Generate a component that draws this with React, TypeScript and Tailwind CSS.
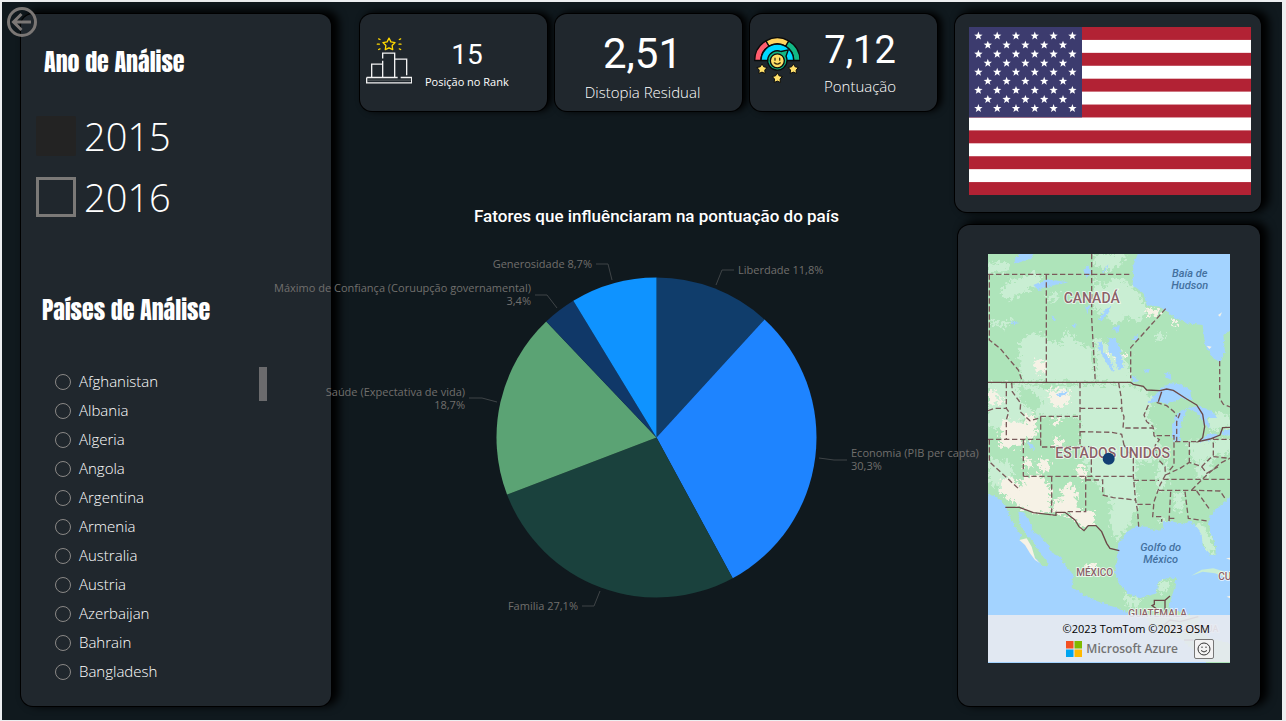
import React from "react";

const panel =
  "rounded-xl bg-[#20272d] shadow-[0_0_0_1px_#000,6px_-2px_8px_2px_#000]";
const card =
  "flex min-w-0 rounded-xl bg-[#20272d] shadow-[0_0_0_1px_#000,4px_-1px_7px_1px_#000]";
const heading =
  "font-['Impact','Anton',sans-serif] text-2xl font-normal leading-8 text-white";

const countries = [
  "Afghanistan",
  "Albania",
  "Algeria",
  "Angola",
  "Argentina",
  "Armenia",
  "Australia",
  "Austria",
  "Azerbaijan",
  "Bahrain",
  "Bangladesh",
];

type Slice = {
  value: number;
  color: string;
  lines: string[];
  x: number;
  y: number;
  anchor: "start" | "end";
  leader: string;
};

const slices: Slice[] = [
  { value: 11.8, color: "#103d6b", lines: ["Liberdade 11,8%"], x: 362, y: 34, anchor: "start", leader: "340,45 346,30 358,30" },
  { value: 30.3, color: "#1e84ff", lines: ["Economia (PIB per capta)", "30,3%"], x: 475, y: 217, anchor: "start", leader: "443,218 458,220 471,220" },
  { value: 27.1, color: "#1a413d", lines: ["Familia 27,1%"], x: 202, y: 370, anchor: "end", leader: "224,351 218,366 206,366" },
  { value: 18.7, color: "#5ba374", lines: ["Saúde (Expectativa de vida)", "18,7%"], x: 89, y: 156, anchor: "end", leader: "121,162 106,158 93,158" },
  { value: 3.4, color: "#103868", lines: ["Máximo de Confiança (Coruupção governamental)", "3,4%"], x: 155, y: 52, anchor: "end", leader: "181,68 171,55 159,55" },
  { value: 8.7, color: "#0f93ff", lines: ["Generosidade 8,7%"], x: 216, y: 28, anchor: "end", leader: "236,40 232,24 220,24" },
];

function starPoints(cx: number, cy: number, r: number, inner = 0.4) {
  const pts: string[] = [];
  for (let i = 0; i < 10; i++) {
    const a = (Math.PI / 5) * i - Math.PI / 2;
    const k = i % 2 ? r * inner : r;
    pts.push(`${(cx + k * Math.cos(a)).toFixed(2)},${(cy + k * Math.sin(a)).toFixed(2)}`);
  }
  return pts.join(" ");
}

function PieChart() {
  const cx = 280.5;
  const cy = 197.5;
  const r = 160;
  const total = slices.reduce((s, d) => s + d.value, 0);
  let acc = 0;
  const point = (v: number) => {
    const a = (v / total) * Math.PI * 2 - Math.PI / 2;
    return `${(cx + r * Math.cos(a)).toFixed(2)} ${(cy + r * Math.sin(a)).toFixed(2)}`;
  };
  return (
    <svg viewBox="0 0 561 400" className="block w-full overflow-visible" role="img" aria-label="Fatores">
      {slices.map((s) => {
        const from = point(acc);
        acc += s.value;
        const to = point(acc);
        return (
          <g key={s.lines[0]}>
            <path d={`M${cx} ${cy}L${from}A${r} ${r} 0 0 1 ${to}Z`} fill={s.color} />
            <polyline points={s.leader} fill="none" stroke="#3f4447" strokeWidth="1" />
            <text x={s.x} y={s.y} textAnchor={s.anchor} fill="#716f6d" className="font-['Open_Sans',sans-serif] text-[11px]">
              {s.lines.map((l, i) => (
                <tspan key={l} x={s.x} dy={i ? 13 : 0}>
                  {l}
                </tspan>
              ))}
            </text>
          </g>
        );
      })}
    </svg>
  );
}

function Flag() {
  const stars: [number, number][] = [];
  for (let row = 0; row < 9; row++) {
    const n = row % 2 ? 5 : 6;
    for (let i = 0; i < n; i++) stars.push([9.4 + (row % 2 ? 9.4 : 0) + i * 18.8, 9 + row * 9.05]);
  }
  return (
    <svg viewBox="0 0 282 168" className="block w-full" role="img" aria-label="Estados Unidos">
      <rect width="282" height="168" fill="#fff" />
      {[0, 2, 4, 6, 8, 10, 12].map((i) => (
        <rect key={i} y={(i * 168) / 13} width="282" height={168 / 13} fill="#b22234" />
      ))}
      <rect width="113" height="90.4" fill="#3c3b6e" />
      {stars.map(([x, y]) => (
        <polygon key={`${x}-${y}`} points={starPoints(x, y, 4.4, 0.42)} fill="#fff" />
      ))}
    </svg>
  );
}

function RankIcon() {
  return (
    <svg viewBox="48 110 138 140" className="mb-1 h-[47px] w-[46px] shrink-0" fill="none" stroke="#f2f2f2" strokeWidth="4">
      <path d="M65 230V191H98M98 230V181M98 174V158H134V230M134 176H170V224" />
      <path d="M50 231H143M152 231H185V247H50V231" />
      <path d="M52 239H183" stroke="#777b7e" strokeWidth="2" />
      <polygon points={starPoints(117, 132, 19, 0.52)} stroke="#ffd800" strokeLinejoin="round" />
      <g stroke="#ffd800" strokeLinecap="round">
        <path d="M86 115L90 117M82 131H88M86 147L90 145M148 117L152 115M147 131H153M148 145L152 147" />
      </g>
    </svg>
  );
}

function ScoreIcon() {
  return (
    <svg viewBox="309 110 138 140" className="mb-1 h-[47px] w-[46px] shrink-0" stroke="#0b0b0b" strokeWidth="4" strokeLinejoin="round">
      <path d="M311 180A68 68 0 0 1 345 121L355 137A49 49 0 0 0 330 180Z" fill="#ff5d6e" />
      <path d="M413 121A68 68 0 0 1 447 180H428A49 49 0 0 0 403 137Z" fill="#12b886" />
      <path d="M345 121A68 68 0 0 1 413 121L404 137A49 49 0 0 0 354 137Z" fill="#ffd45e" />
      <path d="M330 180A49 49 0 0 1 428 180Z" fill="#00d8ff" />
      <path d="M408 180A29 29 0 1 1 390 153L412 148L405 167Q408 173 408 180Z" fill="#12b886" />
      <circle cx="379" cy="181" r="21" fill="#ffdf66" />
      <path d="M372 173V179M386 173V179M370 187Q379 195 388 187" fill="none" stroke="#3a2f10" strokeLinecap="round" />
      <polygon points={starPoints(333, 206, 16, 0.55)} fill="#ffe06b" strokeWidth="3" />
      <polygon points={starPoints(427, 206, 16, 0.55)} fill="#ffe06b" strokeWidth="3" />
      <polygon points={starPoints(379, 233, 16, 0.55)} fill="#ffe06b" strokeWidth="3" />
    </svg>
  );
}

function MapDrawing() {
  return (
    <svg viewBox="24 27 726 1227" preserveAspectRatio="xMidYMin slice" className="block h-full w-full" role="img" aria-label="Mapa">
      <defs>
        <filter id="terrain" x="-5%" y="-5%" width="110%" height="110%">
          <feTurbulence type="fractalNoise" baseFrequency="0.09" numOctaves="3" seed="4" />
          <feDisplacementMap in="SourceGraphic" scale="42" xChannelSelector="R" yChannelSelector="G" />
        </filter>
        <filter id="coast" x="-5%" y="-5%" width="110%" height="110%">
          <feTurbulence type="fractalNoise" baseFrequency="0.12" numOctaves="2" seed="9" />
          <feDisplacementMap in="SourceGraphic" scale="12" xChannelSelector="R" yChannelSelector="G" />
        </filter>
      </defs>
      <rect x="24" y="27" width="726" height="1227" fill="#aee4ba" />
      <g fill="#c9eed3" filter="url(#terrain)">
        <path d="M62 140L85 110L125 100L160 80L190 95L178 125L150 130L120 150L85 165L62 155Z" />
        <path d="M24 60L60 48L90 60L80 85L24 85Z" />
        <path d="M340 100L370 130L400 95L440 110L480 150L500 190L480 230L440 215L405 240L380 215L340 190Z" />
        <path d="M340 27H440L420 60L380 80L345 60Z" />
        <path d="M120 290L160 262L200 280L240 300L262 250L285 285L330 310L345 380L350 412H125L118 350Z" />
        <path d="M345 280L400 300L430 340L452 380V412H350Z" />
        <path d="M28 225L60 232L100 225L80 250L40 240Z" />
        <path d="M200 150L235 140L228 165L205 170Z" />
        <path d="M525 265L555 268L545 285L525 280Z" />
        <path d="M24 414H120L200 430L300 420H455L500 437L520 470L500 500L540 600L520 640H760V700L690 690L640 650H470L460 780L380 755L340 700L310 640L300 600V515H182L150 500L100 560L24 545Z" />
        <path d="M370 700L460 690L480 780L440 850L410 890L390 840L395 780Z" />
        <path d="M620 590L760 580V660L700 690L640 640Z" />
        <path d="M570 740L610 735L625 815L580 820Z" />
        <path d="M24 640L90 650L110 720L60 740L24 700Z" />
        <path d="M680 515L720 500L760 520V545L690 560Z" />
        <path d="M430 1045L480 1062L470 1090L430 1070Z" />
        <path d="M530 1020L560 1005L575 1020L540 1050Z" />
        <path d="M550 720L580 690L600 720L570 760L560 830L540 835Z" />
        <path d="M630 840L670 835L700 900L705 930L680 920Z" />
      </g>
      <g fill="#aee4ba" filter="url(#terrain)">
        <path d="M182 515H300V605H182Z" />
        <path d="M520 650L590 620L640 650L760 620V760L690 800L560 830L510 800L520 720Z" />
        <path d="M470 790L520 780L515 845L475 840Z" />
        <path d="M110 420L160 440L190 470L170 500L130 480Z" />
      </g>
      <g fill="#c9eed3" filter="url(#terrain)">
        <path d="M585 745L612 742L605 800L580 790Z" />
        <path d="M535 660L560 650L565 700L545 740L525 730Z" />
        <path d="M650 650L700 640L690 690L650 700Z" />
      </g>
      <g fill="#f6f2e6" filter="url(#terrain)">
        <path d="M200 428L220 436L262 432L275 460L240 490L215 475Z" />
        <path d="M160 350L180 342L198 360L196 385L170 378Z" />
        <path d="M24 435L45 430L50 460L74 455L60 480L24 478Z" />
        <path d="M62 540L76 525L130 535L150 498L172 530L165 580L128 585V605H60Z" />
        <path d="M218 520L240 518L243 542L222 540Z" />
        <path d="M216 590L230 575L250 590L246 610L216 606Z" />
        <path d="M372 325L410 332L446 325L440 340L380 336Z" />
        <path d="M494 192L535 190L543 206L510 212Z" />
        <path d="M573 222L592 235L588 254L575 240Z" />
        <path d="M60 710L95 695L128 730L125 695L180 690L215 735L212 800L160 805L118 785L60 745Z" />
        <path d="M130 640L155 642L158 662L132 670Z" />
        <path d="M176 646L200 640L212 665L195 680L176 672Z" />
        <path d="M244 740L262 710L290 735L290 790L345 800L340 840L300 845L270 810L216 805L226 760L244 770Z" />
        <path d="M285 660L310 668L320 705L300 700Z" />
        <path d="M318 960L340 950L352 965L330 975Z" />
      </g>
      <g fill="#a3d3ff" filter="url(#coast)">
        <path d="M480 10L460 60L458 120L490 145L500 180L540 185L580 215L620 235L668 240L675 300L700 340L720 352L735 320L730 270L770 240V10Z" />
        <path d="M4 740L50 755L75 778L90 815L108 850L125 872L118 885L140 895L155 925L170 945L190 962L205 965L200 948L180 925L160 890L140 872L120 840L115 800L130 802L150 832L160 860L180 872L205 900L212 920L240 935L258 962L280 990L275 1025L310 1050L350 1068L400 1085L440 1100L490 1112L515 1140L560 1170L600 1180L640 1215L700 1274H4Z" />
        <path d="M410 940L415 895L440 862L470 842L500 845L520 855L552 852L547 832L580 830L610 838L630 826L650 845L665 870L668 900L690 930L706 928L708 905L690 860L685 825L700 800L720 780L770 740V1200L690 1180L655 1150L660 1115L620 1108L565 1090L580 1040L590 1000L560 1000L535 1010L530 1045L480 1060L440 1042L415 1010L405 980Z" />
        <path d="M502 475L545 430L570 415L600 418L630 435L635 462L600 462L560 476L530 470Z" />
        <path d="M580 590L576 545L585 515L605 495L622 492L610 520L600 550L600 588Z" />
        <path d="M622 490L655 482L690 495L714 518L680 520L692 548L670 535L655 505Z" />
        <path d="M655 592L690 565L718 568L695 585Z" />
        <path d="M722 560L770 548V570L730 572Z" />
        <path d="M385 280L405 278L420 310L432 370L415 375L405 335L385 320Z" />
        <path d="M353 290L370 295L372 320L390 345L405 380L395 378L370 340L358 315Z" />
        <path d="M355 225L375 195L395 180L385 205L365 228Z" />
        <path d="M160 120L200 103L265 112L215 122L175 135Z" />
        <path d="M100 45L130 20H165L150 42L110 55Z" />
        <path d="M395 250L420 240L415 262Z" />
        <path d="M455 390L478 408L458 412Z" />
        <path d="M555 385L572 382L574 405L560 398Z" />
        <path d="M485 375L510 372L505 384Z" />
        <path d="M215 210L228 225L220 232Z" />
        <path d="M278 240L292 238L282 250Z" />
        <path d="M145 590L160 600L162 615L148 608Z" />
        <path d="M228 448L262 438L258 448L230 456Z" />
        <path d="M310 75L325 60L334 80L320 100Z" />
        <path d="M365 82L385 58L380 80Z" />
        <path d="M90 228L118 234L100 238Z" />
        <path d="M315 185L330 180L322 205Z" />
        <path d="M455 285L475 265L470 285Z" />
      </g>
      <path d="M634 992L665 974L700 970L750 985V1002L705 985L668 980Z" fill="#c9eed3" />
      <path d="M714 210L726 202L720 215ZM680 302L695 305L688 312Z" fill="#f6f2e6" />
      <path d="M738 940L750 938V944ZM740 1055L750 1052V1060Z" fill="#f6f2e6" />
      <path d="M118 885L140 880L155 905L165 940L180 955L165 945L150 925L135 900Z" fill="#f6f2e6" />
      <g fill="none" stroke="#7b5b5b" strokeWidth="4" strokeDasharray="16 8">
        <path d="M24 88H456" />
        <path d="M28 88V285L60 310L85 340L115 375L128 412" />
        <path d="M199 88V412" />
        <path d="M335 27V220L346 412" />
        <path d="M557 191L452 308V400" />
        <path d="M719 348V460L730 478L750 486" />
        <path d="M79 414V490L86 500L79 525V583M24 497L45 490H80" />
        <path d="M95 414L97 440L122 475L120 500L150 527L182 518" />
        <path d="M300 414V605M300 490H424M182 514H300M182 514V606H300M300 560L395 562L425 568L432 600" />
        <path d="M416 414L424 460L426 500L432 515L429 549H520L522 572L538 584L525 602" />
        <path d="M24 583H182M28 583V650L120 735M130 585V694" />
        <path d="M300 605H334V694M130 694H461M215 694V803" />
        <path d="M317 694V800H255M317 705H368V750L400 758L440 762L466 765" />
        <path d="M432 600L460 640V694L466 760L473 800L476 845" />
        <path d="M461 706H537M550 703H750M537 736H650L720 738L735 760" />
        <path d="M525 602L532 640L555 665L556 690L540 720L522 770L518 815H545V830" />
        <path d="M472 778H522M572 740L567 830M615 740L625 820L682 828M650 738L690 795M567 820H587" />
        <path d="M505 480L492 510L500 530L520 545M530 472L560 482L582 500L590 515M600 505L590 530V590" />
        <path d="M585 590H655M628 590V655M530 572H582V660L565 680M556 690L600 670L628 652L665 665L700 630V580" />
        <path d="M700 583H750M700 635L750 640M635 735L680 690L720 655L750 640" />
        <path d="M665 665L680 685L715 665" />
      </g>
      <g fill="none" stroke="#6b4848" strokeWidth="4">
        <path d="M24 412H452L460 418L490 424L500 435L540 437L560 432L580 436L620 462L650 480L668 508L674 545L668 578L655 590L690 582L720 570L728 548L750 547" />
        <path d="M545 440L535 470" />
        <path d="M76 787H118L160 803L228 811V802H255L285 825L297 845L312 857L325 842H348L365 860L380 895L390 910L418 917" />
        <path d="M570 1053L555 1066H523V1078L516 1082L530 1092M555 1066V1095" />
        <path d="M540 1150L570 1125L600 1130L655 1115M612 1185H640" />
      </g>
      <g className="font-['Roboto',sans-serif] font-medium" fill="#8a6268" stroke="#fff" strokeOpacity="0.8" strokeWidth="5" paintOrder="stroke" textAnchor="middle">
        <text x="335" y="174" className="text-[42px]">CANADÁ</text>
        <text x="398" y="638" className="text-[42px]">ESTADOS UNIDOS</text>
        <text x="344" y="994" className="text-[30px]">MÉXICO</text>
        <text x="533" y="1116" className="text-[30px]">GUATEMALA</text>
        <text x="640" y="1161" className="text-[27px]">NICARAGUA</text>
        <text x="734" y="1005" className="text-[30px]">CU</text>
      </g>
      <g className="font-['Roboto',sans-serif] text-[33px] font-medium italic" fill="#44719f" textAnchor="middle">
        <text x="629" y="96">Baía de</text>
        <text x="629" y="132">Hudson</text>
        <text x="542" y="919">Golfo do</text>
        <text x="542" y="955">México</text>
      </g>
      <circle cx="386" cy="641" r="18" fill="#123f73" />
    </svg>
  );
}

export default function App() {
  return (
    <div className="min-h-screen bg-[#eceef0] pb-px pl-0.5 pr-1 pt-0.5 font-['Open_Sans',sans-serif] text-white">
      <div className="relative flex min-h-[calc(100vh-3px)] bg-[#10191e] px-[19px] pb-3.5 pt-3">
        <button type="button" aria-label="Voltar" className="absolute left-1 top-1 z-20">
          <svg viewBox="0 0 32 32" className="size-8" fill="none" stroke="#7b7775" strokeWidth="3">
            <circle cx="16" cy="16" r="13.5" />
            <path d="M25 16H8M15.500 8L7.500 16L15.500 24" />
          </svg>
        </button>

        <aside className={`${panel} w-[310px] shrink-0 px-[15px] pt-8`}>
          <h2 className={`${heading} pl-2`}>Ano de Análise</h2>
          <div className="mt-[38px] flex flex-col gap-[21px]">
            {["2015", "2016"].map((y) => (
              <label key={y} className="flex h-10 items-center gap-2 text-[38px] font-light leading-10">
                <input
                  type="checkbox"
                  defaultChecked={y === "2015"}
                  className="size-10 shrink-0 appearance-none border-[3px] border-[#7b7977] checked:rounded-xs checked:border-0 checked:bg-[#232323]"
                />
                {y}
              </label>
            ))}
          </div>
          <h2 className={`${heading} mt-[77px] pl-1.5`}>Países de Análise</h2>
          <div className="mt-[41px] flex justify-between pl-[19px] pr-[49px]">
            <ul>
              {countries.map((c) => (
                <li key={c}>
                  <label className="flex h-[29px] items-center gap-2 text-[15px] font-light">
                    <input
                      type="radio"
                      name="pais"
                      className="size-4 appearance-none rounded-full border border-[#8a8886] checked:bg-[#8a8886]"
                    />
                    {c}
                  </label>
                </li>
              ))}
            </ul>
            <div className="h-[34px] w-2 bg-[#6b6b6d]" />
          </div>
        </aside>

        <main className="relative z-10 ml-[29px] mr-[18px] min-w-0 flex-1">
          <div className="grid h-[97px] grid-cols-3 gap-2">
            <section className={`${card} items-center gap-[13px] pl-1.5`}>
              <RankIcon />
              <div className="pt-1.5 text-center">
                <p className="font-['Roboto',sans-serif] text-[28px] leading-8">15</p>
                <p className="text-[11px] leading-[22px]">Posição no Rank</p>
              </div>
            </section>
            <section className={`${card} flex-col items-center justify-center pr-3 pt-2.5`}>
              <p className="font-['Roboto',sans-serif] text-[42px] leading-[48px]">2,51</p>
              <p className="text-[15px] font-light leading-7">Distopia Residual</p>
            </section>
            <section className={`${card} items-center gap-6 pl-1`}>
              <ScoreIcon />
              <div className="pb-0.5 text-center">
                <p className="font-['Roboto',sans-serif] text-[38px] leading-[48px]">7,12</p>
                <p className="text-[15px] font-light leading-6">Pontuação</p>
              </div>
            </section>
          </div>
          <figure className="pl-4 pt-[93px]">
            <figcaption className="text-center font-['Roboto',sans-serif] text-[17px] font-medium leading-6">
              Fatores que influênciaram na pontuação do país
            </figcaption>
            <div className="pt-3">
              <PieChart />
            </div>
          </figure>
        </main>

        <div className="mr-0.5 flex w-[306px] shrink-0 flex-col gap-[13px]">
          <section className={`${panel} pb-[17px] pl-3.5 pr-2.5 pt-[13px]`}>
            <Flag />
          </section>
          <section className={`${panel} ml-[3px] mr-px flex flex-1 flex-col px-[30px] pb-[43px] pt-[29px]`}>
            <div className="relative min-h-0 flex-1">
              <div className="h-full">
                <MapDrawing />
              </div>
              <div className="absolute inset-x-0 bottom-px h-[47px] bg-[#e8eaf1]/90 pr-4 text-black">
                <p className="whitespace-nowrap pr-1 pt-1 text-right text-[11px] leading-5">©2023 TomTom ©2023 OSM</p>
                <div className="flex items-center justify-end gap-4">
                  <span className="flex items-center gap-1 whitespace-nowrap text-[12px] font-semibold leading-5 text-[#737373]">
                    <svg viewBox="0 0 16 16" className="size-4">
                      <path d="M0 0H7.500V7.500H0Z" fill="#f25022" />
                      <path d="M8.500 0H16V7.500H8.500Z" fill="#7fba00" />
                      <path d="M0 8.500H7.500V16H0Z" fill="#00a4ef" />
                      <path d="M8.500 8.500H16V16H8.500Z" fill="#ffb900" />
                    </svg>
                    Microsoft Azure
                  </span>
                  <button type="button" aria-label="Comentários" className="flex size-5 shrink-0 items-center justify-center rounded-xs border border-[#777] bg-[#f3f3f3]">
                    <svg viewBox="0 0 14 14" className="size-3.5" fill="none" stroke="#333" strokeWidth="1">
                      <circle cx="7" cy="7" r="6" />
                      <path d="M4 8.500Q7 11.500 10 8.500M5 4.500V6M9 4.500V6" />
                    </svg>
                  </button>
                </div>
              </div>
            </div>
          </section>
        </div>
      </div>
    </div>
  );
}
